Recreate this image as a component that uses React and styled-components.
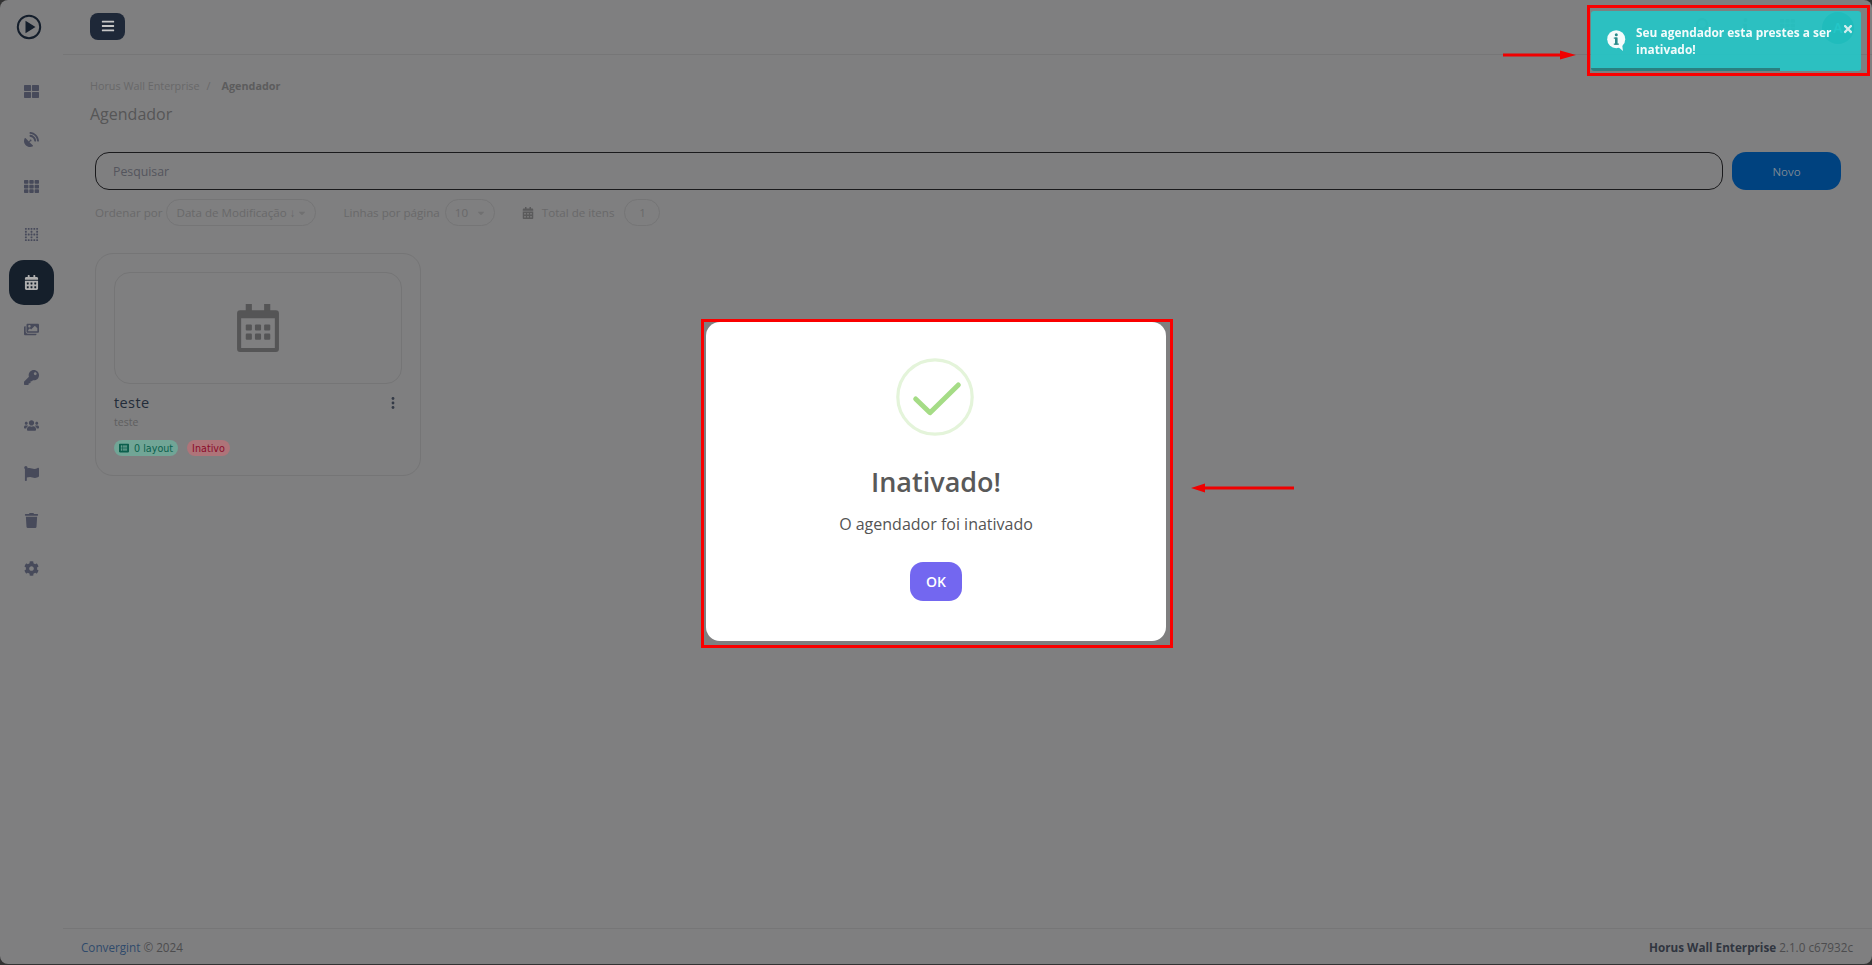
import React from "react";
import styled, { createGlobalStyle } from "styled-components";
import {
  FaThLarge, FaSatelliteDish, FaTh, FaBorderNone, FaCalendarAlt, FaImages, FaKey, FaUsers, FaFlag, FaTrash, FaCog,
  FaBars, FaCaretDown, FaListAlt, FaTimes, FaSearch, FaInfo,
} from "react-icons/fa";

const Global = createGlobalStyle`
  html, body { margin: 0; height: 100%; background: #333; overflow: hidden; }
  body { font-family: "Open Sans", "Noto Sans", sans-serif; }
  * { box-sizing: border-box; }
`;

const Shell = styled.div`
  height: 964px; background: #7f7f80; border-radius: 8px;
  display: grid; grid-template-columns: 63px 1fr; overflow: hidden;
`;
const Sidebar = styled.aside`
  display: flex; flex-direction: column; align-items: center;
`;
const LogoBox = styled.div`
  height: 54px; width: 100%; display: flex; align-items: center; justify-content: center; padding-right: 5px;
`;
const NavList = styled.nav`
  display: flex; flex-direction: column; align-items: center; padding-top: 15px; width: 100%;
`;
const NavItem = styled.div`
  width: 45px; height: 45px; margin-bottom: 2.7px;
  display: flex; align-items: center; justify-content: center;
  font-size: 15px; border-radius: 15px; margin-left: -1px;
  color: ${p => (p.$active ? "#aeaeae" : "#474a5a")};
  background: ${p => (p.$active ? "#151f2b" : "transparent")};
`;
const Main = styled.div`display: flex; flex-direction: column; min-width: 0;`;
const TopBar = styled.header`
  height: 55px; border-bottom: 1px solid #767677; display: flex; align-items: center;
  justify-content: space-between; padding: 0 0 1px 27px; flex: none;
`;
const MenuButton = styled.div`
  width: 35px; height: 27px; margin-top: -1px; border-radius: 8px; background: #1e2838; color: #c6c6c6;
  display: flex; align-items: center; justify-content: center; font-size: 14px;
`;
const TopActions = styled.div`display: flex; align-items: center; color: #5e5e60; font-size: 15px; gap: 27px; padding: 0 18px 3px 0;`;
const Avatar = styled.div`
  width: 32px; height: 32px; border-radius: 50%; background: #055058; color: #2bbabd; font-size: 14px; font-weight: 600;
  display: flex; align-items: center; justify-content: center; margin-top: 5px;
`;
const Content = styled.main`flex: 1; padding: 23px 31px 0 27px; min-height: 0;`;
const Crumbs = styled.div`font-size: 10.8px; color: #686869; line-height: 16px; display: flex; gap: 7px;`;
const CrumbNow = styled.b`color: #5c5c5d; font-weight: 700; margin-left: 4px;`;
const PageTitle = styled.h1`margin: 9px 0 0; font-size: 16px; line-height: 22px; font-weight: 400; color: #565657;`;
const Controls = styled.section`padding: 27px 0 0 5px;`;
const SearchRow = styled.div`display: flex; gap: 9px; height: 38px;`;
const SearchBox = styled.div`
  flex: 1; border: 1px solid #1a1a1c; border-radius: 14px; display: flex; align-items: center; padding-left: 17px;
  font-size: 12.3px; color: #54555d;
`;
const NewButton = styled.div`
  width: 109px; border-radius: 14px; background: #00427f; color: #7b8894; font-size: 11.5px;
  display: flex; align-items: center; justify-content: center;
`;
const FilterRow = styled.div`display: flex; align-items: center; height: 27px; margin-top: 9px; font-size: 11.6px; color: #69696a;`;
const FilterLabel = styled.span`white-space: nowrap; margin-left: ${p => p.$ml || 0}px;`;
const Pill = styled.div`
  height: 27px; border: 1px solid #757576; border-radius: 14px; display: flex; align-items: center; justify-content: ${p => (p.$center ? "center" : "space-between")};
  width: ${p => p.$w}px; margin-left: ${p => p.$ml}px; padding: 0 ${p => (p.$center ? 0 : 8)}px 0 ${p => (p.$center ? 0 : 9)}px; color: #69696a; white-space: nowrap;
  svg { font-size: 10px; color: #707071; flex: none; }
`;
const TotalIcon = styled.span`display: flex; margin: 0 8px 0 27px; font-size: 12px; color: #5a5a5b;`;
const Card = styled.article`
  width: 326px; height: 223px; margin: 27px 0 0 5px; border: 1px solid #757576; border-radius: 18px; padding: 18px;
`;
const Thumb = styled.div`
  height: 112px; border: 1px solid #757576; border-radius: 16px; display: flex; align-items: center; justify-content: center;
`;
const CardHead = styled.div`display: flex; align-items: center; justify-content: space-between; margin-top: 9px; padding-right: 7px;`;
const CardTitle = styled.div`font-size: 14.5px; line-height: 20px; letter-spacing: .4px; color: #232c39;`;
const Kebab = styled.svg`width: 4px; height: 12px; fill: #333a46;`;
const CardSub = styled.div`font-size: 10.5px; line-height: 13px; color: #5e5e5f; margin-top: 3px;`;
const Tags = styled.div`display: flex; gap: 9px; margin-top: 11px;`;
const Tag = styled.span`
  height: 16px; padding: 0 5px; border-radius: 8px; font-family: "DejaVu Sans", sans-serif; font-size: 9.6px; line-height: 15px;
  display: inline-flex; align-items: center; gap: 5px; background: ${p => p.$bg}; color: ${p => p.$fg};
  svg { font-size: 10px; }
`;
const Footer = styled.footer`
  height: 36px; flex: none; border-top: 1px solid #767677; display: flex; align-items: center; justify-content: space-between;
  padding: 0 19px 0 18px; font-size: 11.7px; color: #4c4c4e;
`;
const Brand = styled.span`color: #2f4a6b;`;
const Product = styled.b`color: #30353f; font-weight: 700;`;

const Backdrop = styled.div`
  position: fixed; inset: 0; display: flex; align-items: center; justify-content: center;
`;
const Modal = styled.div`
  width: 460px; height: 319px; background: #fff; border-radius: 14px; margin-top: -2px;
  display: flex; flex-direction: column; align-items: center; padding-top: 36px;
`;
const SuccessSvg = styled.svg`flex: none; margin-right: 2px;`;
const ModalTitle = styled.h2`margin: 27px 0 0; font-size: 27px; line-height: 38px; font-weight: 600; color: #595959;`;
const ModalText = styled.p`margin: 11px 0 0; font-size: 16px; line-height: 24px; color: #545454;`;
const OkButton = styled.button`
  margin-top: 26px; width: 52px; height: 39px; border: 0; border-radius: 13px; background: #7367f0; color: #fff;
  font: 600 14px "Open Sans", sans-serif;
`;
const Toast = styled.div`
  position: fixed; top: 11px; left: 1591px; width: 270px; height: 60px; border-radius: 3px; background: rgba(35, 200, 200, .9);
  display: flex; align-items: center; padding: 0 10px 0 16px; overflow: hidden;
`;
const ToastText = styled.div`margin-left: 10px; font-size: 11.9px; line-height: 17px; font-weight: 700; color: #f2fbfb; width: 205px;`;
const ToastClose = styled.div`position: absolute; top: 12px; right: 7px; color: #d3eeee; font-size: 12px; display: flex;`;
const ToastProgress = styled.div`position: absolute; left: 0; bottom: 0; height: 3px; background: #2a8080;`;
const Frame = styled.div`
  position: fixed; border: 3px solid #fa0000; pointer-events: none;
  left: ${p => p.$x}px; top: ${p => p.$y}px; width: ${p => p.$w}px; height: ${p => p.$h}px;
`;
const ArrowSvg = styled.svg`position: fixed; left: ${p => p.$x}px; top: ${p => p.$y}px;`;

const Logo = () => (
  <svg width="26" height="26" viewBox="0 0 26 26">
    <circle cx="13" cy="13" r="11.2" fill="none" stroke="#141e2b" strokeWidth="2" />
    <path d="M9.5 6.8 L19.5 13 L9.5 19.2 Z" fill="#141e2b" />
  </svg>
);
const BigCalendar = () => (
  <svg width="42" height="48" viewBox="0 0 41 47" fill="#555556">
    <rect x="8.5" y="0" width="6" height="9" />
    <rect x="26.5" y="0" width="6" height="9" />
    <path fillRule="evenodd" d="M3 6h35a3 3 0 0 1 3 3v35a3 3 0 0 1-3 3H3a3 3 0 0 1-3-3V9a3 3 0 0 1 3-3zM4 14v29h33V14z" />
    {[8.5, 17.5, 26.5].map(x => [20, 29].map(y => <rect key={`${x}-${y}`} x={x} y={y} width="6" height="6" rx="1" />))}
  </svg>
);
const SuccessMark = () => (
  <SuccessSvg width="78" height="78" viewBox="0 0 78 78">
    <circle cx="39" cy="39" r="37.2" fill="none" stroke="#e4f4da" strokeWidth="3.2" />
    <path d="M19.7 41 L34 54.7 L62.3 27" fill="none" stroke="#a5dc86" strokeWidth="5" strokeLinecap="round" strokeLinejoin="round" />
  </SuccessSvg>
);
const InfoBubble = () => (
  <svg width="19" height="22" viewBox="0 0 19 22">
    <circle cx="9.2" cy="9.2" r="9" fill="#f4fbfb" />
    <path d="M10 16l6 5-1-7z" fill="#f4fbfb" />
    <rect x="8" y="7.5" width="2.6" height="7" fill="#2a8a8a" />
    <circle cx="9.3" cy="4.8" r="1.5" fill="#2a8a8a" />
    <rect x="6.8" y="13.5" width="5" height="1.3" fill="#2a8a8a" />
    <rect x="6.8" y="7.5" width="3" height="1.2" fill="#2a8a8a" />
  </svg>
);
const Arrow = ({ x, y, w, flip }) => (
  <ArrowSvg $x={x} $y={y} width={w} height="10" viewBox={`0 0 ${w} 10`}>
    {flip
      ? <path d={`M0 5 L14 .5 V3.5 H${w} V6.5 H14 V9.5 Z`} fill="#f00000" />
      : <path d={`M${w} 5 L${w - 16} .5 V3.5 H0 V6.5 H${w - 16} V9.5 Z`} fill="#f00000" />}
  </ArrowSvg>
);

const nav = [
  [FaThLarge], [FaSatelliteDish], [FaTh], [FaBorderNone], [FaCalendarAlt, true],
  [FaImages], [FaKey], [FaUsers], [FaFlag], [FaTrash], [FaCog],
];

export default function App() {
  return (
    <>
      <Global />
      <Shell>
        <Sidebar>
          <LogoBox><Logo /></LogoBox>
          <NavList>
            {nav.map(([Icon, active], i) => (
              <NavItem key={i} $active={active}><Icon /></NavItem>
            ))}
          </NavList>
        </Sidebar>
        <Main>
          <TopBar>
            <MenuButton><FaBars /></MenuButton>
            <TopActions>
              <FaSearch />
              <FaInfo />
              <FaTh />
              <Avatar>A</Avatar>
            </TopActions>
          </TopBar>
          <Content>
            <Crumbs><span>Horus Wall Enterprise</span><span>/</span><CrumbNow>Agendador</CrumbNow></Crumbs>
            <PageTitle>Agendador</PageTitle>
            <Controls>
              <SearchRow>
                <SearchBox>Pesquisar</SearchBox>
                <NewButton>Novo</NewButton>
              </SearchRow>
              <FilterRow>
                <FilterLabel>Ordenar por</FilterLabel>
                <Pill $w={150} $ml={4}>Data de Modificação ↓<FaCaretDown /></Pill>
                <FilterLabel $ml={27}>Linhas por página</FilterLabel>
                <Pill $w={50} $ml={5}>10<FaCaretDown /></Pill>
                <TotalIcon><FaCalendarAlt /></TotalIcon>
                <FilterLabel>Total de itens</FilterLabel>
                <Pill $w={36} $ml={10} $center>1</Pill>
              </FilterRow>
            </Controls>
            <Card>
              <Thumb><BigCalendar /></Thumb>
              <CardHead>
                <CardTitle>teste</CardTitle>
                <Kebab viewBox="0 0 4 12"><circle cx="2" cy="1.5" r="1.4" /><circle cx="2" cy="6" r="1.4" /><circle cx="2" cy="10.5" r="1.4" /></Kebab>
              </CardHead>
              <CardSub>teste</CardSub>
              <Tags>
                <Tag $bg="#71a596" $fg="#0b5f4d"><FaListAlt />0 layout</Tag>
                <Tag $bg="#ae7479" $fg="#8b0c2a">Inativo</Tag>
              </Tags>
            </Card>
          </Content>
          <Footer>
            <span><Brand>Convergint</Brand> © 2024</span>
            <span><Product>Horus Wall Enterprise</Product> 2.1.0 c67932c</span>
          </Footer>
        </Main>
      </Shell>
      <Backdrop>
        <Modal>
          <SuccessMark />
          <ModalTitle>Inativado!</ModalTitle>
          <ModalText>O agendador foi inativado</ModalText>
          <OkButton>OK</OkButton>
        </Modal>
      </Backdrop>
      <Toast>
        <InfoBubble />
        <ToastText>Seu agendador esta prestes a ser inativado!</ToastText>
        <ToastClose><FaTimes /></ToastClose>
        <ToastProgress style={{ width: "70%" }} />
      </Toast>
      <Frame $x={1587} $y={5} $w={283} $h={71} />
      <Frame $x={701} $y={319} $w={472} $h={329} />
      <Arrow x={1503} y={50} w={73} />
      <Arrow x={1191} y={483} w={103} flip />
    </>
  );
}
